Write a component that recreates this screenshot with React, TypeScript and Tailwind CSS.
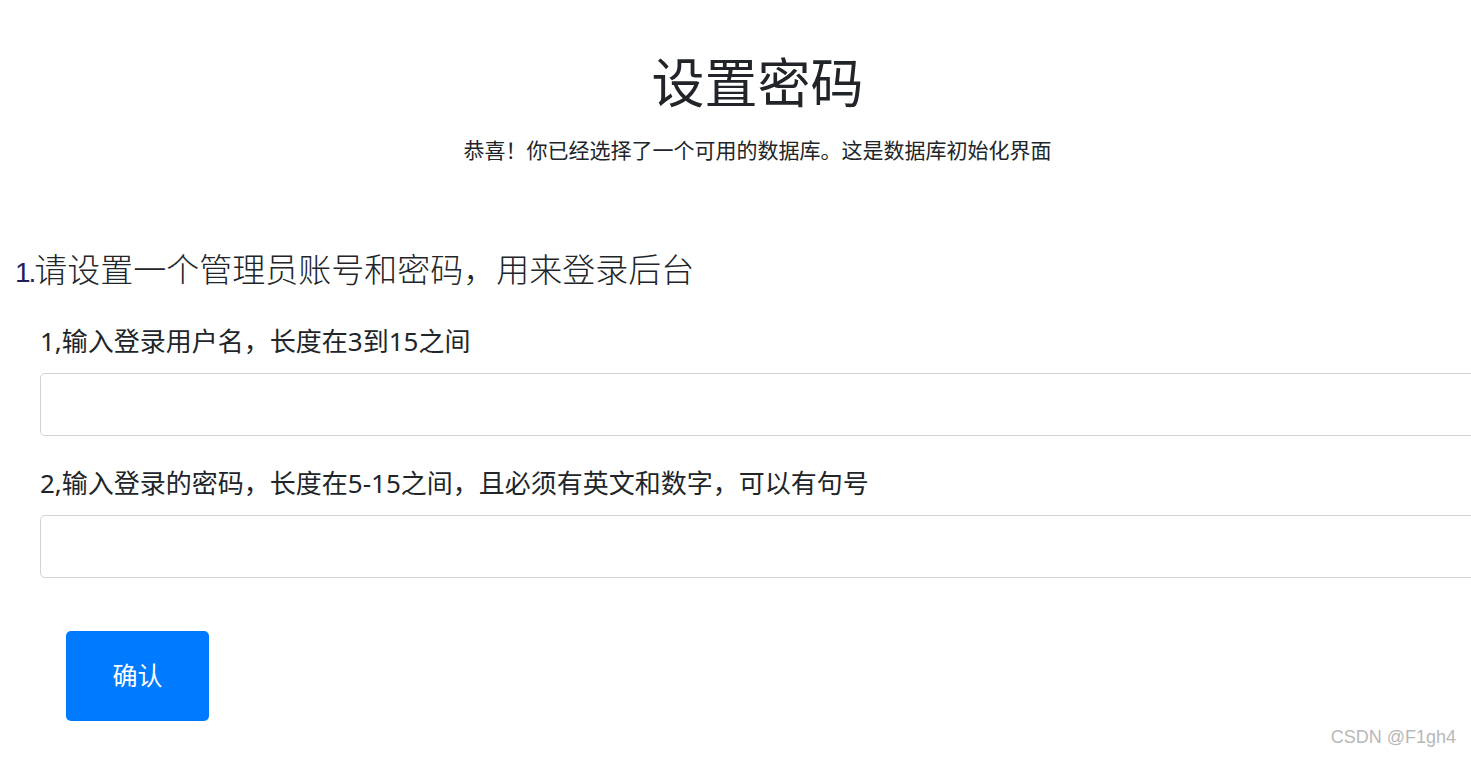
import { useState } from "react";

const cjk = "font-['Noto_Sans','Noto_Sans_CJK_SC',sans-serif]";

export default function App() {
  const [user, setUser] = useState("");
  const [pass, setPass] = useState("");

  return (
    <div className={`relative w-[1471px] h-[759px] overflow-hidden bg-white text-[#212529] ${cjk}`}>
      {/* Header */}
      <div className="flex flex-col items-center pt-[50px] pl-[44px]">
        <h1 className="text-[53px] leading-[66px] font-normal">设置密码</h1>
        <p className="mt-[19px] text-[21px] leading-[30px]">
          恭喜！你已经选择了一个可用的数据库。这是数据库初始化界面
        </p>
      </div>

      {/* Form */}
      <div className="mt-[83px] pl-[15px]">
        <h2 className="text-[33px] leading-[44px] font-light">
          <span className="font-['Liberation_Sans',sans-serif] font-light text-[28px] text-[#1f1f5a] tracking-[-2px]">1.</span>
          请设置一个管理员账号和密码，用来登录后台
        </h2>

        <div className="pl-[25px] mt-[28px]">
          <label className="block text-[26px] leading-[36px]">1,输入登录用户名，长度在3到15之间</label>
          <input
            value={user}
            onChange={(e) => setUser(e.target.value)}
            className="mt-[14px] block w-[1460px] h-[63px] rounded-[5px] border border-[#ced4da] px-3 outline-none"
          />

          <label className="mt-[29px] block text-[26px] leading-[36px]">
            2,输入登录的密码，长度在5-15之间，且必须有英文和数字，可以有句号
          </label>
          <input
            type="password"
            value={pass}
            onChange={(e) => setPass(e.target.value)}
            className="mt-[14px] block w-[1460px] h-[63px] rounded-[5px] border border-[#ced4da] px-3 outline-none"
          />

          <button className="ml-[26px] mt-[53px] w-[143px] h-[90px] rounded-[5px] bg-[#007bff] text-white text-[25px]">
            确认
          </button>
        </div>
      </div>

      {/* watermark */}
      <div className="absolute right-[15px] bottom-[8px] text-[18px] text-[#b8b8b8] font-['Liberation_Sans',sans-serif]">
        CSDN @F1gh4
      </div>
    </div>
  );
}
